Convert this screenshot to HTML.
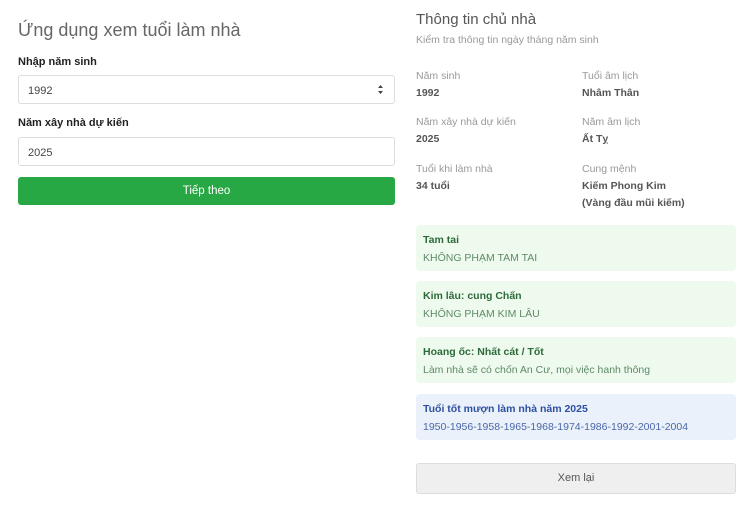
<!DOCTYPE html>
<html><head><meta charset="utf-8"><style>
*{margin:0;padding:0;box-sizing:border-box}
body{width:747px;height:507px;background:#fff;font-family:"Liberation Sans","Noto Sans CJK SC",sans-serif;position:relative;overflow:hidden;color:#333}
.a{position:absolute;white-space:nowrap;line-height:1}
.inp{position:absolute;left:18px;width:377px;height:29px;border:1px solid #ddd;border-radius:3px;font-size:11px;color:#444;padding:9px 9px}
.lb{font-size:11px;font-weight:bold;color:#222}
.k{font-size:10.5px;color:#999}
.v{font-size:10.5px;font-weight:bold;color:#555}
.box{position:absolute;left:416px;width:320px;height:46px;border-radius:4px;background:#eefaee;padding:9px 7px}
.box b{display:block;font-size:10.5px;color:#2d6a3a;margin-bottom:6px}
.box span{display:block;font-size:10.5px;color:#5d8a66}
</style></head><body>
<div class="a" style="left:18px;top:21px;font-size:18px;color:#666">Ứng dụng xem tuổi làm nhà</div>
<div class="a lb" style="left:18px;top:57px">Nhập năm sinh</div>
<div class="inp" style="top:75px">1992<svg style="position:absolute;right:10px;top:8px" width="7" height="11"><path d="M1 4L3.5 1L6 4Z M1 7L3.5 10L6 7Z" fill="#444"/></svg></div>
<div class="a lb" style="left:18px;top:118px">Năm xây nhà dự kiến</div>
<div class="inp" style="top:137px">2025</div>
<div class="a" style="left:18px;top:177px;width:377px;height:28px;background:#28a745;border-radius:3px;color:#fff;font-size:11.5px;text-align:center;line-height:28px">Tiếp theo</div>

<div class="a" style="left:416px;top:12px;font-size:15px;color:#555">Thông tin chủ nhà</div>
<div class="a" style="left:416px;top:35px;font-size:10.5px;color:#999">Kiểm tra thông tin ngày tháng năm sinh</div>
<div class="a k" style="left:416px;top:71px">Năm sinh</div>
<div class="a v" style="left:416px;top:88px">1992</div>
<div class="a k" style="left:582px;top:71px">Tuổi âm lịch</div>
<div class="a v" style="left:582px;top:88px">Nhâm Thân</div>
<div class="a k" style="left:416px;top:117px">Năm xây nhà dự kiến</div>
<div class="a v" style="left:416px;top:134px">2025</div>
<div class="a k" style="left:582px;top:117px">Năm âm lịch</div>
<div class="a v" style="left:582px;top:134px">Ất Tỵ</div>
<div class="a k" style="left:416px;top:164px">Tuổi khi làm nhà</div>
<div class="a v" style="left:416px;top:181px">34 tuổi</div>
<div class="a k" style="left:582px;top:164px">Cung mệnh</div>
<div class="a v" style="left:582px;top:181px">Kiếm Phong Kim</div>
<div class="a v" style="left:582px;top:198px">(Vàng đầu mũi kiếm)</div>

<div class="box" style="top:225px"><b>Tam tai</b><span>KHÔNG PHẠM TAM TAI</span></div>
<div class="box" style="top:281px"><b>Kim lâu: cung Chấn</b><span>KHÔNG PHẠM KIM LÂU</span></div>
<div class="box" style="top:337px"><b>Hoang ốc: Nhất cát / Tốt</b><span>Làm nhà sẽ có chốn An Cư, mọi việc hanh thông</span></div>
<div class="box" style="top:394px;background:#ebf1fb"><b style="color:#2c4fa0">Tuổi tốt mượn làm nhà năm 2025</b><span style="color:#4a67a8">1950-1956-1958-1965-1968-1974-1986-1992-2001-2004</span></div>
<div class="a" style="left:416px;top:463px;width:320px;height:31px;background:#efefef;border:1px solid #ddd;border-radius:3px;text-align:center;line-height:29px;font-size:11px;color:#555">Xem lại</div>
</body></html>
